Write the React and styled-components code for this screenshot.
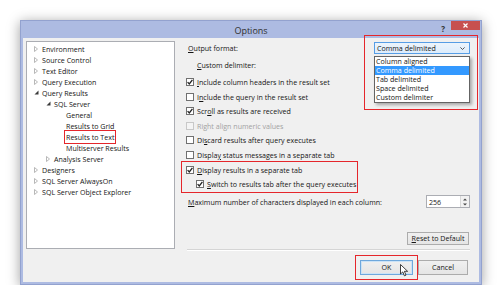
import React from "react";
import styled, { createGlobalStyle } from "styled-components";

const GlobalStyle = createGlobalStyle`
  body {
    margin: 0;
    background: #ffffff;
    font-family: "Open Sans", "Noto Sans", sans-serif;
    font-size: 7.1px;
    color: #151515;
  }
`;

const Frame = styled.div`
  margin: 20px 0 0 20px;
  width: 462px;
  height: 265px;
  box-sizing: border-box;
  background: #adbbe2;
  border: 1px solid #93a2cf;
  box-shadow: 0 2px 12px rgba(0, 0, 0, 0.38);
  display: flex;
  flex-direction: column;
`;

const TitleBar = styled.div`
  height: 17px;
  display: flex;
  align-items: flex-start;
  position: relative;
`;

const Title = styled.div`
  position: absolute;
  left: 0;
  right: 0;
  top: 3px;
  text-align: center;
  font-size: 9px;
  color: #303030;
`;

const Help = styled.span`
  margin-left: auto;
  margin-top: 2px;
  margin-right: 6px;
  font-size: 8px;
  font-weight: 700;
  color: #333;
`;

const CloseButton = styled.div`
  width: 29px;
  height: 9px;
  margin-right: 1px;
  background: #c7504f;
  display: flex;
  align-items: center;
  justify-content: center;
`;

const Client = styled.div`
  flex: 1;
  margin: 0 2px 2px 2px;
  background: #f0f0f0;
  display: flex;
  gap: 11px;
  padding: 3px 9px 0 3px;
`;

const Tree = styled.div`
  width: 149px;
  height: 208px;
  box-sizing: border-box;
  background: #ffffff;
  border: 1px solid #abadb3;
  padding-top: 1px;
`;

const TreeRow = styled.div`
  height: 11px;
  display: flex;
  align-items: center;
  padding-left: ${({ $level }) => 7 + ($level - 1) * 12}px;
  white-space: nowrap;
`;

const Expander = styled.span`
  width: 8px;
  display: flex;
  align-items: center;
`;

const TreeLabel = styled.span`
  outline: ${({ $marked }) => ($marked ? "1.5px solid #e5262b" : "none")};
  outline-offset: 1px;
`;

const Pane = styled.div`
  flex: 1;
  display: flex;
  flex-direction: column;
`;

const FormatRow = styled.div`
  margin-top: 1px;
  height: 12px;
  display: flex;
  align-items: center;
  justify-content: space-between;
  padding-left: 2px;
`;

const Label = styled.span`
  padding-left: ${({ $indent }) => $indent || 0}px;
  white-space: nowrap;
`;

const ComboWrap = styled.div`
  position: relative;
  width: 96px;
  height: 12px;
`;

const Combo = styled.div`
  height: 12px;
  box-sizing: border-box;
  border: 1px solid #569de5;
  background: linear-gradient(#ecf4fc, #dcecfc);
  display: flex;
  align-items: center;
  justify-content: space-between;
  padding: 0 4px 0 2px;
`;

const DropList = styled.div`
  position: absolute;
  top: 14px;
  left: 0;
  width: 96px;
  box-sizing: border-box;
  background: #ffffff;
  border: 1px solid #646464;
  box-shadow: 2px 2px 3px rgba(0, 0, 0, 0.3);
  z-index: 2;
`;

const DropItem = styled.div`
  height: 9px;
  line-height: 9px;
  padding-left: 1px;
  background: ${({ $selected }) => ($selected ? "#3399ff" : "transparent")};
  color: ${({ $selected }) => ($selected ? "#ffffff" : "#151515")};
`;

const Marker = styled.div`
  position: absolute;
  left: -10px;
  top: -7px;
  width: 114px;
  height: 75px;
  box-sizing: border-box;
  border: 1.5px solid #e5262b;
  z-index: 3;
  pointer-events: none;
`;

const CustomRow = styled.div`
  margin-top: 4px;
  height: 14px;
  display: flex;
  align-items: center;
`;

const Checks = styled.div`
  margin-top: 2.7px;
  display: flex;
  flex-direction: column;
`;

const CheckRow = styled.div`
  height: 14.6px;
  display: flex;
  align-items: center;
  gap: 3px;
  padding-left: ${({ $indent }) => $indent || 0}px;
  color: ${({ $disabled }) => ($disabled ? "#a2a2a2" : "#151515")};
  white-space: nowrap;
`;

const Box = styled.span`
  width: 8px;
  height: 8px;
  box-sizing: border-box;
  background: ${({ $disabled }) => ($disabled ? "#f4f4f4" : "#ffffff")};
  border: 1px solid ${({ $disabled }) => ($disabled ? "#c8c8c8" : "#707070")};
  display: flex;
  align-items: center;
  justify-content: center;
  flex-shrink: 0;
`;

const Group = styled.div`
  width: 175px;
  box-sizing: border-box;
  margin-left: -4px;
  padding: 0 0 1px 4px;
  outline: 1.5px solid #e5262b;
`;

const MaxRow = styled.div`
  margin-top: 2.5px;
  height: 14px;
  display: flex;
  align-items: center;
  justify-content: space-between;
  padding-left: 2px;
`;

const Spin = styled.div`
  width: 44px;
  height: 13px;
  box-sizing: border-box;
  background: #ffffff;
  border: 1px solid #abadb3;
  display: flex;
  align-items: center;
  justify-content: space-between;
  padding-left: 2px;
`;

const SpinButtons = styled.div`
  width: 8px;
  height: 11px;
  display: flex;
  flex-direction: column;
  border-left: 1px solid #d8d8d8;
`;

const SpinHalf = styled.div`
  flex: 1;
  display: flex;
  align-items: center;
  justify-content: center;
  background: #f2f2f2;
`;

const ResetRow = styled.div`
  margin-top: 23px;
  display: flex;
  justify-content: flex-end;
  padding-right: 1px;
`;

const Button = styled.div`
  width: ${({ $width }) => $width}px;
  height: ${({ $height }) => $height || 13}px;
  box-sizing: border-box;
  border: 1px solid ${({ $primary }) => ($primary ? "#6fa8dc" : "#acacac")};
  box-shadow: ${({ $primary }) => ($primary ? "inset 0 0 0 1px #cbe3f7" : "none")};
  background: linear-gradient(#f0f0f0, #e5e5e5);
  display: flex;
  align-items: center;
  justify-content: center;
  position: relative;
`;

const Separator = styled.div`
  margin-top: 4px;
  margin-left: 1px;
  height: 0;
  border-top: 1px solid #d5d5d5;
  border-bottom: 1px solid #ffffff;
`;

const ButtonRow = styled.div`
  margin-top: 9px;
  display: flex;
  justify-content: flex-end;
  gap: 3px;
  padding-right: 2px;
`;

const OkMark = styled.div`
  outline: 1.5px solid #e5262b;
  outline-offset: 4px;
  margin-right: 2px;
`;

const Cursor = styled.svg`
  position: absolute;
  left: 39px;
  top: 3px;
`;

const Arrow = ({ open }) =>
  open ? (
    <svg width="5" height="5" viewBox="0 0 5 5">
      <path d="M4.5 0.5 L4.5 4.5 L0.5 4.5 Z" fill="#3a3a3a" />
    </svg>
  ) : (
    <svg width="4" height="6" viewBox="0 0 4 6">
      <path d="M0.5 0.5 L3.5 3 L0.5 5.5 Z" fill="none" stroke="#a6a6a6" strokeWidth="0.8" />
    </svg>
  );

const Tick = () => (
  <svg width="6" height="6" viewBox="0 0 6 6">
    <path d="M0.6 3.1 L2.3 4.9 L5.4 0.8" fill="none" stroke="#222" strokeWidth="1.3" />
  </svg>
);

const treeItems = [
  { level: 1, arrow: "closed", label: "Environment" },
  { level: 1, arrow: "closed", label: "Source Control" },
  { level: 1, arrow: "closed", label: "Text Editor" },
  { level: 1, arrow: "closed", label: "Query Execution" },
  { level: 1, arrow: "open", label: "Query Results" },
  { level: 2, arrow: "open", label: "SQL Server" },
  { level: 3, label: "General" },
  { level: 3, label: "Results to Grid" },
  { level: 3, label: "Results to Text", marked: true },
  { level: 3, label: "Multiserver Results" },
  { level: 2, arrow: "closed", label: "Analysis Server" },
  { level: 1, arrow: "closed", label: "Designers" },
  { level: 1, arrow: "closed", label: "SQL Server AlwaysOn" },
  { level: 1, arrow: "closed", label: "SQL Server Object Explorer" },
];

const formats = [
  "Column aligned",
  "Comma delimited",
  "Tab delimited",
  "Space delimited",
  "Custom delimiter",
];

const Check = ({ checked, disabled, indent, children }) => (
  <CheckRow $disabled={disabled} $indent={indent}>
    <Box $disabled={disabled}>{checked && <Tick />}</Box>
    <span>{children}</span>
  </CheckRow>
);

export default function App() {
  return (
    <>
      <GlobalStyle />
      <Frame>
        <TitleBar>
          <Title>Options</Title>
          <Help>?</Help>
          <CloseButton>
            <svg width="5" height="5" viewBox="0 0 5 5">
              <path d="M0.5 0.5 L4.5 4.5 M4.5 0.5 L0.5 4.5" stroke="#fff" strokeWidth="1.2" />
            </svg>
          </CloseButton>
        </TitleBar>
        <Client>
          <Tree>
            {treeItems.map((item) => (
              <TreeRow key={item.label} $level={item.level}>
                <Expander>{item.arrow && <Arrow open={item.arrow === "open"} />}</Expander>
                <TreeLabel $marked={item.marked}>{item.label}</TreeLabel>
              </TreeRow>
            ))}
          </Tree>
          <Pane>
            <FormatRow>
              <Label>
                <u>O</u>utput format:
              </Label>
              <ComboWrap>
                <Combo>
                  <span>Comma delimited</span>
                  <svg width="5" height="3" viewBox="0 0 5 3">
                    <path d="M0.4 0.4 L2.5 2.5 L4.6 0.4" fill="none" stroke="#444" strokeWidth="0.9" />
                  </svg>
                </Combo>
                <DropList>
                  {formats.map((f) => (
                    <DropItem key={f} $selected={f === "Comma delimited"}>
                      {f}
                    </DropItem>
                  ))}
                </DropList>
                <Marker />
              </ComboWrap>
            </FormatRow>
            <CustomRow>
              <Label $indent={11}>
                <u>C</u>ustom delimiter:
              </Label>
            </CustomRow>
            <Checks>
              <Check checked>
                <u>I</u>nclude column headers in the result set
              </Check>
              <Check>
                I<u>n</u>clude the query in the result set
              </Check>
              <Check checked>
                Scr<u>o</u>ll as results are received
              </Check>
              <Check disabled>Right align numeric values</Check>
              <Check>
                Di<u>s</u>card results after query executes
              </Check>
              <Check>
                Displa<u>y</u> status messages in a separate tab
              </Check>
              <Group>
                <Check checked>
                  <u>D</u>isplay results in a separate tab
                </Check>
                <Check checked indent={10}>
                  <u>S</u>witch to results tab after the query executes
                </Check>
              </Group>
            </Checks>
            <MaxRow>
              <Label>
                <u>M</u>aximum number of characters displayed in each column:
              </Label>
              <Spin>
                <span>256</span>
                <SpinButtons>
                  <SpinHalf>
                    <svg width="4" height="3" viewBox="0 0 4 3">
                      <path d="M0 2.5 L2 0.5 L4 2.5 Z" fill="#444" />
                    </svg>
                  </SpinHalf>
                  <SpinHalf>
                    <svg width="4" height="3" viewBox="0 0 4 3">
                      <path d="M0 0.5 L2 2.5 L4 0.5 Z" fill="#444" />
                    </svg>
                  </SpinHalf>
                </SpinButtons>
              </Spin>
            </MaxRow>
            <ResetRow>
              <Button $width={62}>
                <span>
                  <u>R</u>eset to Default
                </span>
              </Button>
            </ResetRow>
            <Separator />
            <ButtonRow>
              <OkMark>
                <Button $width={53} $height={15} $primary>
                  OK
                  <Cursor width="9" height="13" viewBox="0 0 9 13">
                    <path
                      d="M0.5 0.5 L0.5 10 L2.8 7.9 L4.4 11.8 L6 11.1 L4.4 7.3 L7.6 7.3 Z"
                      fill="#ffffff"
                      stroke="#111"
                      strokeWidth="0.8"
                      strokeLinejoin="round"
                    />
                  </Cursor>
                </Button>
              </OkMark>
              <Button $width={50} $height={15}>
                Cancel
              </Button>
            </ButtonRow>
          </Pane>
        </Client>
      </Frame>
    </>
  );
}
